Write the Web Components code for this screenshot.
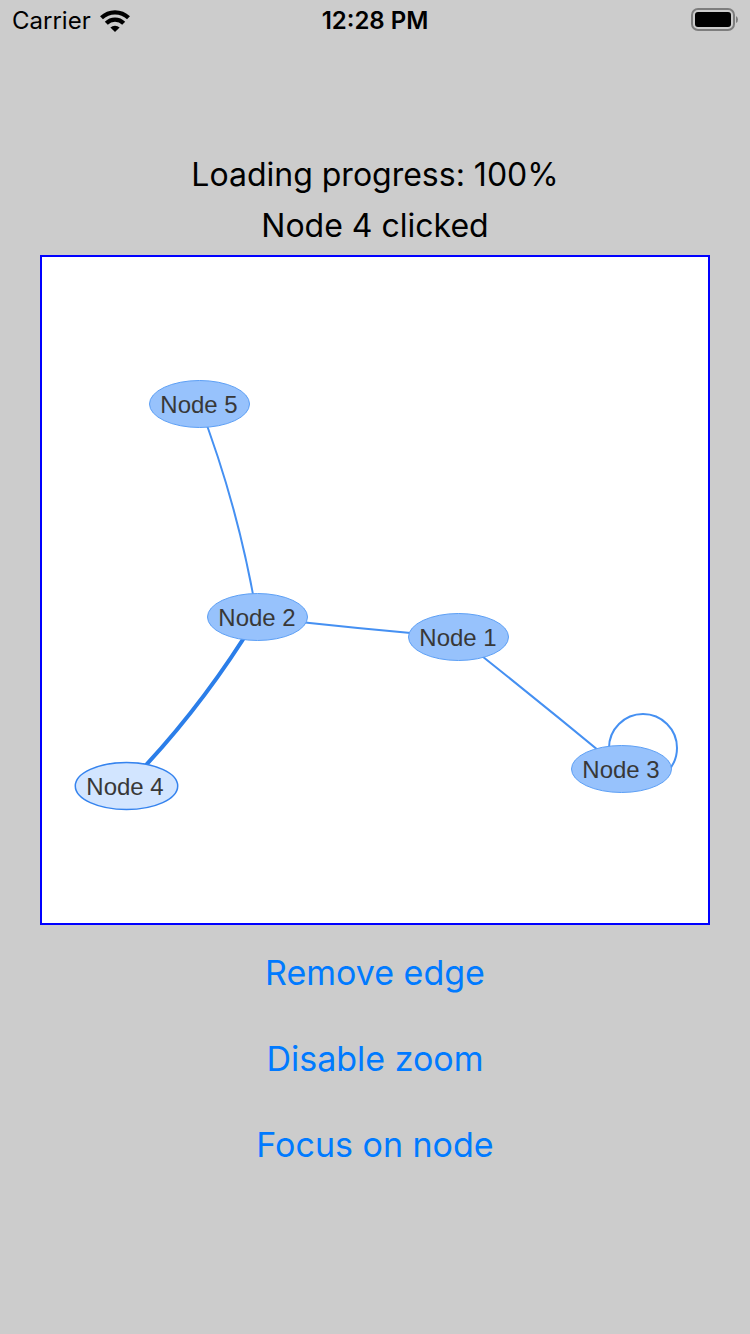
<!DOCTYPE html>
<html lang="en">
<head>
<meta charset="utf-8">
<meta name="viewport" content="width=device-width, initial-scale=1">
<title>Network graph</title>
<style>
  html { height: 100%; }
  body { margin: 0; min-height: 100%; background: #ccc; color: #000; font-family: Inter, "Liberation Sans", sans-serif; }
</style>
</head>
<body>
<graph-app></graph-app>
<script>
const define = (name, html, setup) => {
  const template = document.createElement('template');
  template.innerHTML = html;
  customElements.define(name, class extends HTMLElement {
    constructor() {
      super();
      this.attachShadow({ mode: 'open' }).append(template.content.cloneNode(true));
    }
    connectedCallback() { if (setup) setup(this); }
  });
};

define('status-bar', `
<style>
  :host { display: grid; grid-template-columns: 1fr auto 1fr; align-items: center; height: 40px; padding: 0 12px; font-size: 24px; line-height: 30px; }
  .carrier { display: flex; align-items: center; gap: 9px; }
  .time { font-weight: 600; }
  .carrier, .time { padding-top: 1px; }
  .battery { justify-self: end; }
  svg { display: block; }
</style>
<div class="carrier"><slot name="carrier"></slot>
  <svg width="30" height="22" viewBox="0 0 30 22" aria-hidden="true">
    <g fill="none" stroke="#000" stroke-width="4.2">
      <path d="M1.5 7.8A19.5 19.5 0 0 1 28.5 7.8"/>
      <path d="M6.3 13.2A12.2 12.2 0 0 1 23.7 13.2"/>
    </g>
    <path d="M15 22L10.4 17.6A6.6 6.6 0 0 1 19.6 17.6Z"/>
  </svg>
</div>
<div class="time"><slot name="time"></slot></div>
<svg class="battery" width="47" height="24" viewBox="0 0 47 24" role="img" aria-label="Battery full">
  <rect x="1" y="1" width="42" height="21" rx="6" fill="none" stroke="#7d7d7d" stroke-width="2"/>
  <rect x="4" y="4" width="36" height="15" rx="3"/>
  <path d="M45 8Q47 9 47 11.5T45 15Z" fill="#7d7d7d"/>
</svg>`);

define('status-line', `
<style>
  :host { display: block; font-size: 32px; line-height: 51px; text-align: center; }
</style>
<slot></slot>`);

define('action-button', `
<style>
  :host { display: block; }
  button { display: block; margin: 0 auto; padding: 22px 24px; border: 0; background: none; color: #007aff; font: inherit; font-size: 34px; line-height: 42px; cursor: pointer; }
</style>
<button type="button"><slot></slot></button>`);

define('network-graph', `
<style>
  :host { display: block; box-sizing: border-box; margin-top: 4px; border: 2px solid #00f; background: #fff; }
  svg { display: block; width: 100%; height: auto; }
  .edge { fill: none; stroke: #4590f2; stroke-width: 2; }
  .edge.selected { stroke: #2b7ee9; stroke-width: 4; }
  ellipse { fill: #97c2fc; stroke: #5c9ff5; stroke-width: 1; }
  .selected ellipse { fill: #d2e5ff; stroke: #3583ee; stroke-width: 1.5; }
  text { fill: #383838; font-family: "Liberation Sans", Arial, sans-serif; font-size: 24px; text-anchor: middle; }
</style>
<svg viewBox="0 0 666 666" role="group" aria-label="Network of five nodes"></svg>`, host => {
  const NS = 'http://www.w3.org/2000/svg';
  const svg = host.shadowRoot.querySelector('svg');
  const add = (parent, tag, attributes) => {
    const el = document.createElementNS(NS, tag);
    for (const key in attributes) el.setAttribute(key, attributes[key]);
    parent.append(el);
    return el;
  };
  const nodes = { 5: [157, 147], 2: [215, 360], 1: [416, 380], 3: [579, 512], 4: [84, 529] };
  const edges = [[5, 2, 197, 251], [2, 1, 316, 372], [1, 3, 498, 445], [2, 4, 158, 454]];
  for (const [from, to, cx, cy] of edges) {
    add(svg, 'path', {
      class: to === 4 ? 'edge selected' : 'edge',
      d: `M${nodes[from]} Q${cx},${cy} ${nodes[to]}`
    });
  }
  add(svg, 'circle', { class: 'edge', cx: 601, cy: 491, r: 34 });
  for (const id in nodes) {
    const [cx, cy] = nodes[id];
    const selected = id === '4';
    const group = add(svg, 'g', { class: selected ? 'selected' : '' });
    add(group, 'ellipse', { cx: cx + 0.5, cy, rx: selected ? 51.2 : 50, ry: 23.5 });
    add(group, 'text', { x: selected ? cx - 1 : cx, y: cy + 9 }).textContent = `Node ${id}`;
  }
});

define('graph-app', `
<style>
  :host { display: block; }
  main { padding: 109px 40px 40px; }
  .actions { padding-top: 5px; }
</style>
<status-bar><span slot="carrier">Carrier</span><span slot="time">12:28 PM</span></status-bar>
<main>
  <status-line>Loading progress: 100%</status-line>
  <status-line>Node 4 clicked</status-line>
  <network-graph></network-graph>
  <div class="actions">
    <action-button>Remove edge</action-button>
    <action-button>Disable zoom</action-button>
    <action-button>Focus on node</action-button>
  </div>
</main>`);
</script>
</body>
</html>
